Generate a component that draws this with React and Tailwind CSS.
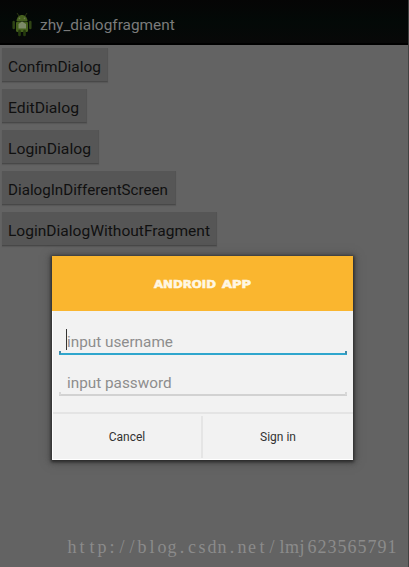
const ACTIONS = [
  { label: 'ConfimDialog', box: 'w-[106px]', text: 'w-[93px]' },
  { label: 'EditDialog', box: 'w-[85px]', text: 'w-[71px]' },
  { label: 'LoginDialog', box: 'w-[97px]', text: 'w-[83px]' },
  { label: 'DialogInDifferentScreen', box: 'w-[174px]', text: 'w-[160px]' },
  { label: 'LoginDialogWithoutFragment', box: 'w-[215px]', text: 'w-[202px]' },
];

const BLOG_URL = 'http://blog.csdn.net/lmj623565791';
const URL_POSITIONS = Array.from(BLOG_URL, (_, i) => 5 + i * 10).join(' ');

function AndroidIcon() {
  return (
    <svg className="ml-[11px] h-[26px] w-[22px] shrink-0" viewBox="0 0 22 26">
      <path d="M6 1l2 3M16 1l-2 3" stroke="#2a3613" strokeWidth="1" />
      <path d="M5.5 9C6 1 16 1 16.500 9z" fill="#46601f" />
      <circle cx="8.500" cy="6.400" r="0.8" fill="#6c7a50" />
      <circle cx="13.500" cy="6.400" r="0.8" fill="#6c7a50" />
      <rect x="5" y="9.500" width="12" height="10.500" rx="1.500" fill="#45601d" />
      <path d="M2.700 10v6M19.300 10v6" stroke="#2f4414" strokeWidth="2.500" strokeLinecap="round" />
      <path d="M8.500 19v4M13.500 19v4" stroke="#253a0e" strokeWidth="2.700" strokeLinecap="round" />
      <path d="M7.500 12l3.500-2.500 4 2.500v4.500h-7.500z" fill="#7d8a68" />
    </svg>
  );
}

function Field({ label, active }) {
  return (
    <div className={'relative mx-[6px] h-[30px] border-b-2 ' + (active ? 'border-[#2fa6cd]' : 'border-[#d2d2d2]')}>
      <span className={'absolute -bottom-[1px] left-0 h-[3px] w-[2px] ' + (active ? 'bg-[#428caa]' : 'bg-[#d8d8d8]')} />
      <span className={'absolute -bottom-[1px] right-0 h-[3px] w-[2px] ' + (active ? 'bg-[#428caa]' : 'bg-[#d8d8d8]')} />
      {active && <span className="absolute left-[7px] top-[4px] h-[21px] w-px bg-[#343434]" />}
      <span className="block pl-[8px] pt-[6px] text-[15.3px] leading-[22px] text-[#8d8d8d]">{label}</span>
    </div>
  );
}

export default function App() {
  return (
    <div className="relative h-[567px] w-[409px] overflow-hidden border-r border-[#424242] bg-[#636363] font-['Roboto',sans-serif]">
      <header className="flex h-[45px] items-center border-b-2 border-black bg-linear-to-b from-[#050505] via-[#030907] to-[#080808] pt-[6px]">
        <AndroidIcon />
        <h1 className="ml-[7px] text-[15.4px] leading-5 text-[#7b7b7b]">zhy_dialogfragment</h1>
      </header>
      <main className="flex flex-col items-start gap-[7px] pl-[2px] pt-[3px]">
        {ACTIONS.map((a) => (
          <button key={a.label} className={'flex h-[34px] items-center border-b border-r border-b-[#484848] border-r-[#535353] bg-[#565656] pl-[6px] pt-[5px] text-left shadow-[0_1px_1px_#585858] ' + a.box}>
            <svg className={'h-[22px] overflow-visible ' + a.text}>
              <text x="0" y="16" textLength="100%" lengthAdjust="spacingAndGlyphs" fill="#101010" fontSize="15.5">{a.label}</text>
            </svg>
          </button>
        ))}
      </main>
      <section className="absolute left-[52px] top-[256px] flex h-[204px] w-[301px] flex-col border-b border-l border-white bg-[#f2f2f2] shadow-[0_1px_3px_1px_#292929,0_1px_8px_2px_#4a4a4a]">
        <div className="-ml-px flex h-[55px] items-center justify-center bg-[#fab62f]">
          <svg className="h-[12px] w-[98px] overflow-visible">
            <g fill="#fff7e3" stroke="#fff7e3" strokeWidth="0.6" fontFamily="DejaVu Sans" fontWeight="700" fontSize="11">
              <text x="0" y="10" textLength="62" lengthAdjust="spacingAndGlyphs">ANDROID</text>
              <text x="68" y="10" textLength="29" lengthAdjust="spacingAndGlyphs">APP</text>
            </g>
          </svg>
        </div>
        <div className="flex h-[103px] flex-col gap-[11px] border-b-2 border-[#e4e4e4] pt-[14px]">
          <Field label="input username" active />
          <Field label="input password" />
        </div>
        <div className="grid flex-1 grid-cols-2 pb-px pt-[2px] text-[12px] text-[#333]">
          <button className="border-r-2 border-[#e5e5e5]">Cancel</button>
          <button>Sign in</button>
        </div>
      </section>
      <footer className="absolute left-[67px] top-[537px]">
        <svg className="h-[24px] w-[331px] overflow-visible">
          <text x={URL_POSITIONS} y="16" textAnchor="middle" fill="#8b8b8b" fontFamily="Liberation Serif" fontSize="18">{BLOG_URL}</text>
        </svg>
      </footer>
    </div>
  );
}
